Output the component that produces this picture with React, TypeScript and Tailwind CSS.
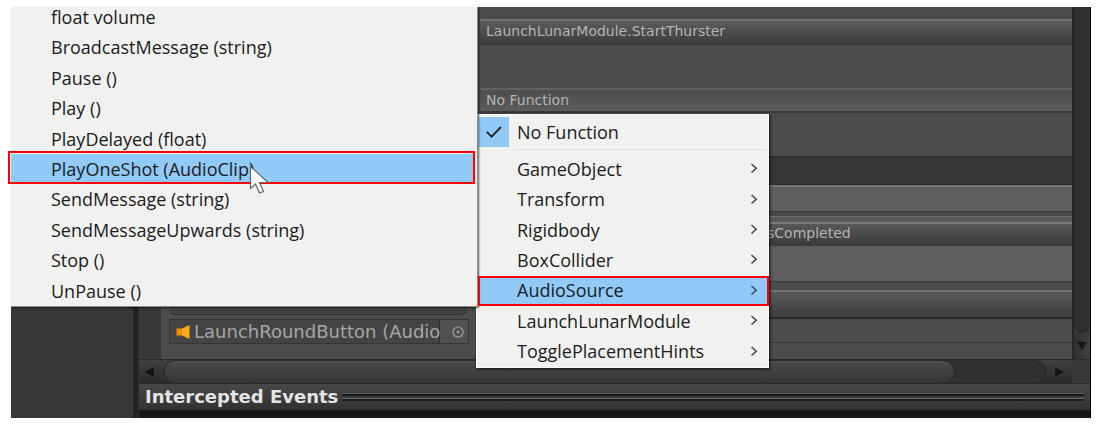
import React from "react";

const methods = [
  "BroadcastMessage (string)",
  "Pause ()",
  "Play ()",
  "PlayDelayed (float)",
  "PlayOneShot (AudioClip)",
  "SendMessage (string)",
  "SendMessageUpwards (string)",
  "Stop ()",
  "UnPause ()",
];

const targets = [
  "GameObject",
  "Transform",
  "Rigidbody",
  "BoxCollider",
  "AudioSource",
  "LaunchLunarModule",
  "TogglePlacementHints",
];

function Chevron() {
  return (
    <svg className="h-3 w-2" viewBox="0 0 8 12" fill="none" stroke="#444" strokeWidth="1.5" aria-hidden="true">
      <path d="M1.5 1 6.2 5.2 1.5 9.5" />
    </svg>
  );
}

function MethodMenu() {
  return (
    <div
      role="menu"
      className="absolute top-0 left-0 flex h-[300px] w-[467px] flex-col border-r border-b border-[#8a8a8a] bg-[#f1f1f0] pr-[2px] shadow-[1px_1px_2px_rgba(0,0,0,0.6)]"
    >
      <button role="menuitem" className="flex h-[25px] shrink-0 items-start pl-10 text-left leading-5">
        float volume
      </button>
      <div className="grid flex-1 auto-rows-fr leading-6">
        {methods.map((name) => (
          <button
            key={name}
            role="menuitem"
            className={
              name.startsWith("PlayOneShot")
                ? "flex items-center bg-[#91c9f7] pl-10 text-left"
                : "flex items-center pl-10 text-left"
            }
          >
            {name}
          </button>
        ))}
      </div>
    </div>
  );
}

function TargetMenu() {
  return (
    <div
      role="menu"
      className="absolute top-[107px] left-[465px] w-[293px] border border-[#fafafa] bg-[#f1f1f0] pt-[2px] shadow-[1px_1px_3px_rgba(0,0,0,0.8)]"
    >
      <button role="menuitemradio" aria-checked="true" className="flex h-[30px] w-full items-center text-left">
        <span className="ml-[2px] flex h-[30px] w-[30px] items-center justify-center bg-[#91c9f7]">
          <svg className="h-4 w-4" viewBox="0 0 16 16" fill="none" stroke="#222" strokeWidth="1.8" aria-hidden="true">
            <path d="M.8 7.8 5.6 12.6 15 3" />
          </svg>
        </span>
        <span className="pl-2">No Function</span>
      </button>
      <div className="mt-[2px] mr-[2px] mb-1 ml-9 h-px bg-[#dfdfdf]" />
      <div className="grid h-[213px] auto-rows-fr">
        {targets.map((name) => (
          <button
            key={name}
            role="menuitem"
            aria-haspopup="menu"
            className={
              name === "AudioSource"
                ? "flex items-center justify-between bg-[#91c9f7] pr-[10px] pl-10 text-left"
                : "flex items-center justify-between pr-[10px] pl-10 text-left"
            }
          >
            <span>{name}</span>
            <Chevron />
          </button>
        ))}
      </div>
    </div>
  );
}

function ObjectColumn() {
  return (
    <div className="flex w-[319px] shrink-0 flex-col justify-end bg-[#4c4c4c] pr-[11px] pb-[15px] pl-2">
      <div className="mr-[2px] mb-1 h-6 rounded-b-md border-b border-[#333] bg-[#414141]" />
      <div className="flex h-[25px] border border-[#353535]">
        <button className="flex min-w-0 flex-1 items-center gap-1 border-r border-[#303030] bg-[#444] pl-[6px] text-[#a6a6a6]">
          <svg className="h-4 w-[14px] shrink-0" viewBox="0 0 14 16" aria-hidden="true">
            <path d="M.5 4.5H6V11.5H.5Z" fill="#f28f0a" />
            <path d="M6 4.5 13.5 1V15L6 11.5Z" fill="#ffa91a" />
          </svg>
          <span className="text-[18px] whitespace-nowrap">LaunchRoundButton (Audio</span>
        </button>
        <button aria-label="Select object" className="flex w-[28px] shrink-0 items-center justify-end bg-[#515151] pr-1">
          <svg className="h-3 w-3" viewBox="0 0 12 12" fill="none" stroke="#a0a0a0" aria-hidden="true">
            <circle cx="6" cy="6" r="5" strokeWidth="1.2" />
            <circle cx="6" cy="6" r="1" fill="#a0a0a0" />
          </svg>
        </button>
      </div>
    </div>
  );
}

function FunctionColumn() {
  return (
    <div className="flex min-w-0 flex-1 flex-col bg-[#4c4c4c] text-[14px] text-[#b4b4b4]">
      <button className="mt-3 flex h-[26px] items-center border-t-2 border-[#727272] bg-linear-to-b from-[#5c5c5c] to-[#3b3b3b] pb-1 pl-[6px]">
        LaunchLunarModule.StartThurster
      </button>
      <button className="mt-[43px] flex h-[25px] items-center border-t-2 border-b-2 border-t-[#626262] border-b-[#3a3a3a] bg-linear-to-b from-[#4e4e4e] to-[#5b5b5b] pl-[6px]">
        No Function
      </button>
      <div className="mt-[43px] h-[29px] border-t border-b border-[#2b2b2b] bg-[#373737]" />
      <div className="h-[27px] border-t-2 border-b border-t-[#747474] border-b-[#383838] bg-[#5e5e5e]" />
      <div className="h-1 bg-[#484848]" />
      <div className="h-[6px] border-t border-[#707070] bg-[#585858]" />
      <button className="flex h-6 items-center border-t-2 border-[#7a7a7a] bg-linear-to-b from-[#585858] to-[#3a3a3a] pb-1 pl-[287px]">
        sCompleted
      </button>
      <div className="h-[36px] border-b border-[#383838] bg-[#5e5e5e]" />
      <button
        aria-label="Function"
        className="mt-2 h-[29px] border-t-2 border-b-2 border-t-[#727272] border-b-[#282828] bg-linear-to-b from-[#5a5a5a] to-[#3d3d3d]"
      />
      <div className="h-6 border-b border-[#353535]" />
      <div className="h-4" />
    </div>
  );
}

function HorizontalScroll() {
  return (
    <div className="flex h-[25px] border-t border-b border-[#292929]">
      <div className="flex min-w-0 flex-1 items-center bg-linear-to-b from-[#404040] to-[#2b2b2b]">
        <button aria-label="Scroll left" className="flex h-full w-[26px] shrink-0 items-center pl-[6px]">
          <svg className="h-[10px] w-[9px]" viewBox="0 0 9 10" aria-hidden="true">
            <path d="M9 0V10L0 5Z" fill="#151515" />
          </svg>
        </button>
        <div className="flex h-[22px] min-w-0 flex-1 rounded-full bg-[#303030] shadow-[0_0_1px_1px_#292929]">
          <div className="h-[22px] w-[89.5%] rounded-full border-t border-[#555] bg-linear-to-b from-[#4a4a4a] to-[#363636]" />
        </div>
        <button aria-label="Scroll right" className="flex h-full w-[27px] shrink-0 items-center justify-end pr-2">
          <svg className="h-[10px] w-[9px]" viewBox="0 0 9 10" aria-hidden="true">
            <path d="M0 0V10L9 5Z" fill="#151515" />
          </svg>
        </button>
      </div>
      <div className="w-[18px] bg-[#383838]" />
    </div>
  );
}

export default function App() {
  return (
    <div className="bg-white pt-[7px] pr-[6px] pb-[7px] pl-[11px] font-['DejaVu_Sans',sans-serif]">
      <main className="relative flex border-r border-black bg-[#383838]">
        <aside className="w-[122px] shrink-0 bg-[#383838]" />
        <div className="w-[6px] shrink-0 border-r border-[#303030] bg-[#232323]" />
        <div className="flex min-w-0 flex-1 flex-col">
          <div className="flex">
            <div className="w-[22px] shrink-0 bg-[#383838]" />
            <ObjectColumn />
            <FunctionColumn />
            <div className="flex w-[18px] shrink-0 flex-col border-l-2 border-[#272727] bg-[#3c3c3c]">
              <div className="flex-1 rounded-b-full border-b-2 border-[#262626] bg-[#303030]" />
              <button aria-label="Scroll down" className="flex h-[26px] items-center justify-center bg-linear-to-r from-[#303030] to-[#404040]">
                <svg className="h-2 w-[10px]" viewBox="0 0 10 8" aria-hidden="true">
                  <path d="M0 0H10L5 8Z" fill="#151515" />
                </svg>
              </button>
            </div>
          </div>
          <HorizontalScroll />
          <div className="flex h-[26px] items-center gap-1 bg-linear-to-b from-[#474747] to-[#323232] pr-[6px] pl-[6px]">
            <h2 className="text-[18px] leading-6 font-bold whitespace-nowrap text-[#e4e4e4]">Intercepted Events</h2>
            <div className="flex flex-1 flex-col gap-[2px]">
              <div className="h-[3px] border-t border-b-2 border-t-[#5a5a5a] border-b-[#1a1a1a]" />
              <div className="h-[3px] border-t border-b-2 border-t-[#686868] border-b-[#1a1a1a]" />
            </div>
          </div>
          <div className="h-2 bg-[#191919]" />
        </div>

        <div className="font-['Open_Sans','Noto_Sans',sans-serif] text-[18px] text-[#1c1c1c]">
          <TargetMenu />
          <MethodMenu />
        </div>
        <div className="pointer-events-none absolute top-[144px] -left-[3px] h-[33px] w-[467px] border-2 border-[#ff0000]" />
        <div className="pointer-events-none absolute top-[269px] left-[467px] h-[30px] w-[291px] border-2 border-[#ff0000]" />
        <svg className="pointer-events-none absolute top-[158px] left-[238px] h-[30px] w-[21px]" viewBox="0 0 21 30" aria-hidden="true">
          <path d="M1.5 1.5V23.5L6.5 19 10.5 28 14.5 26.5 10.5 17.5H19Z" fill="#fff" stroke="#666" strokeWidth="1.2" />
        </svg>
      </main>
    </div>
  );
}
